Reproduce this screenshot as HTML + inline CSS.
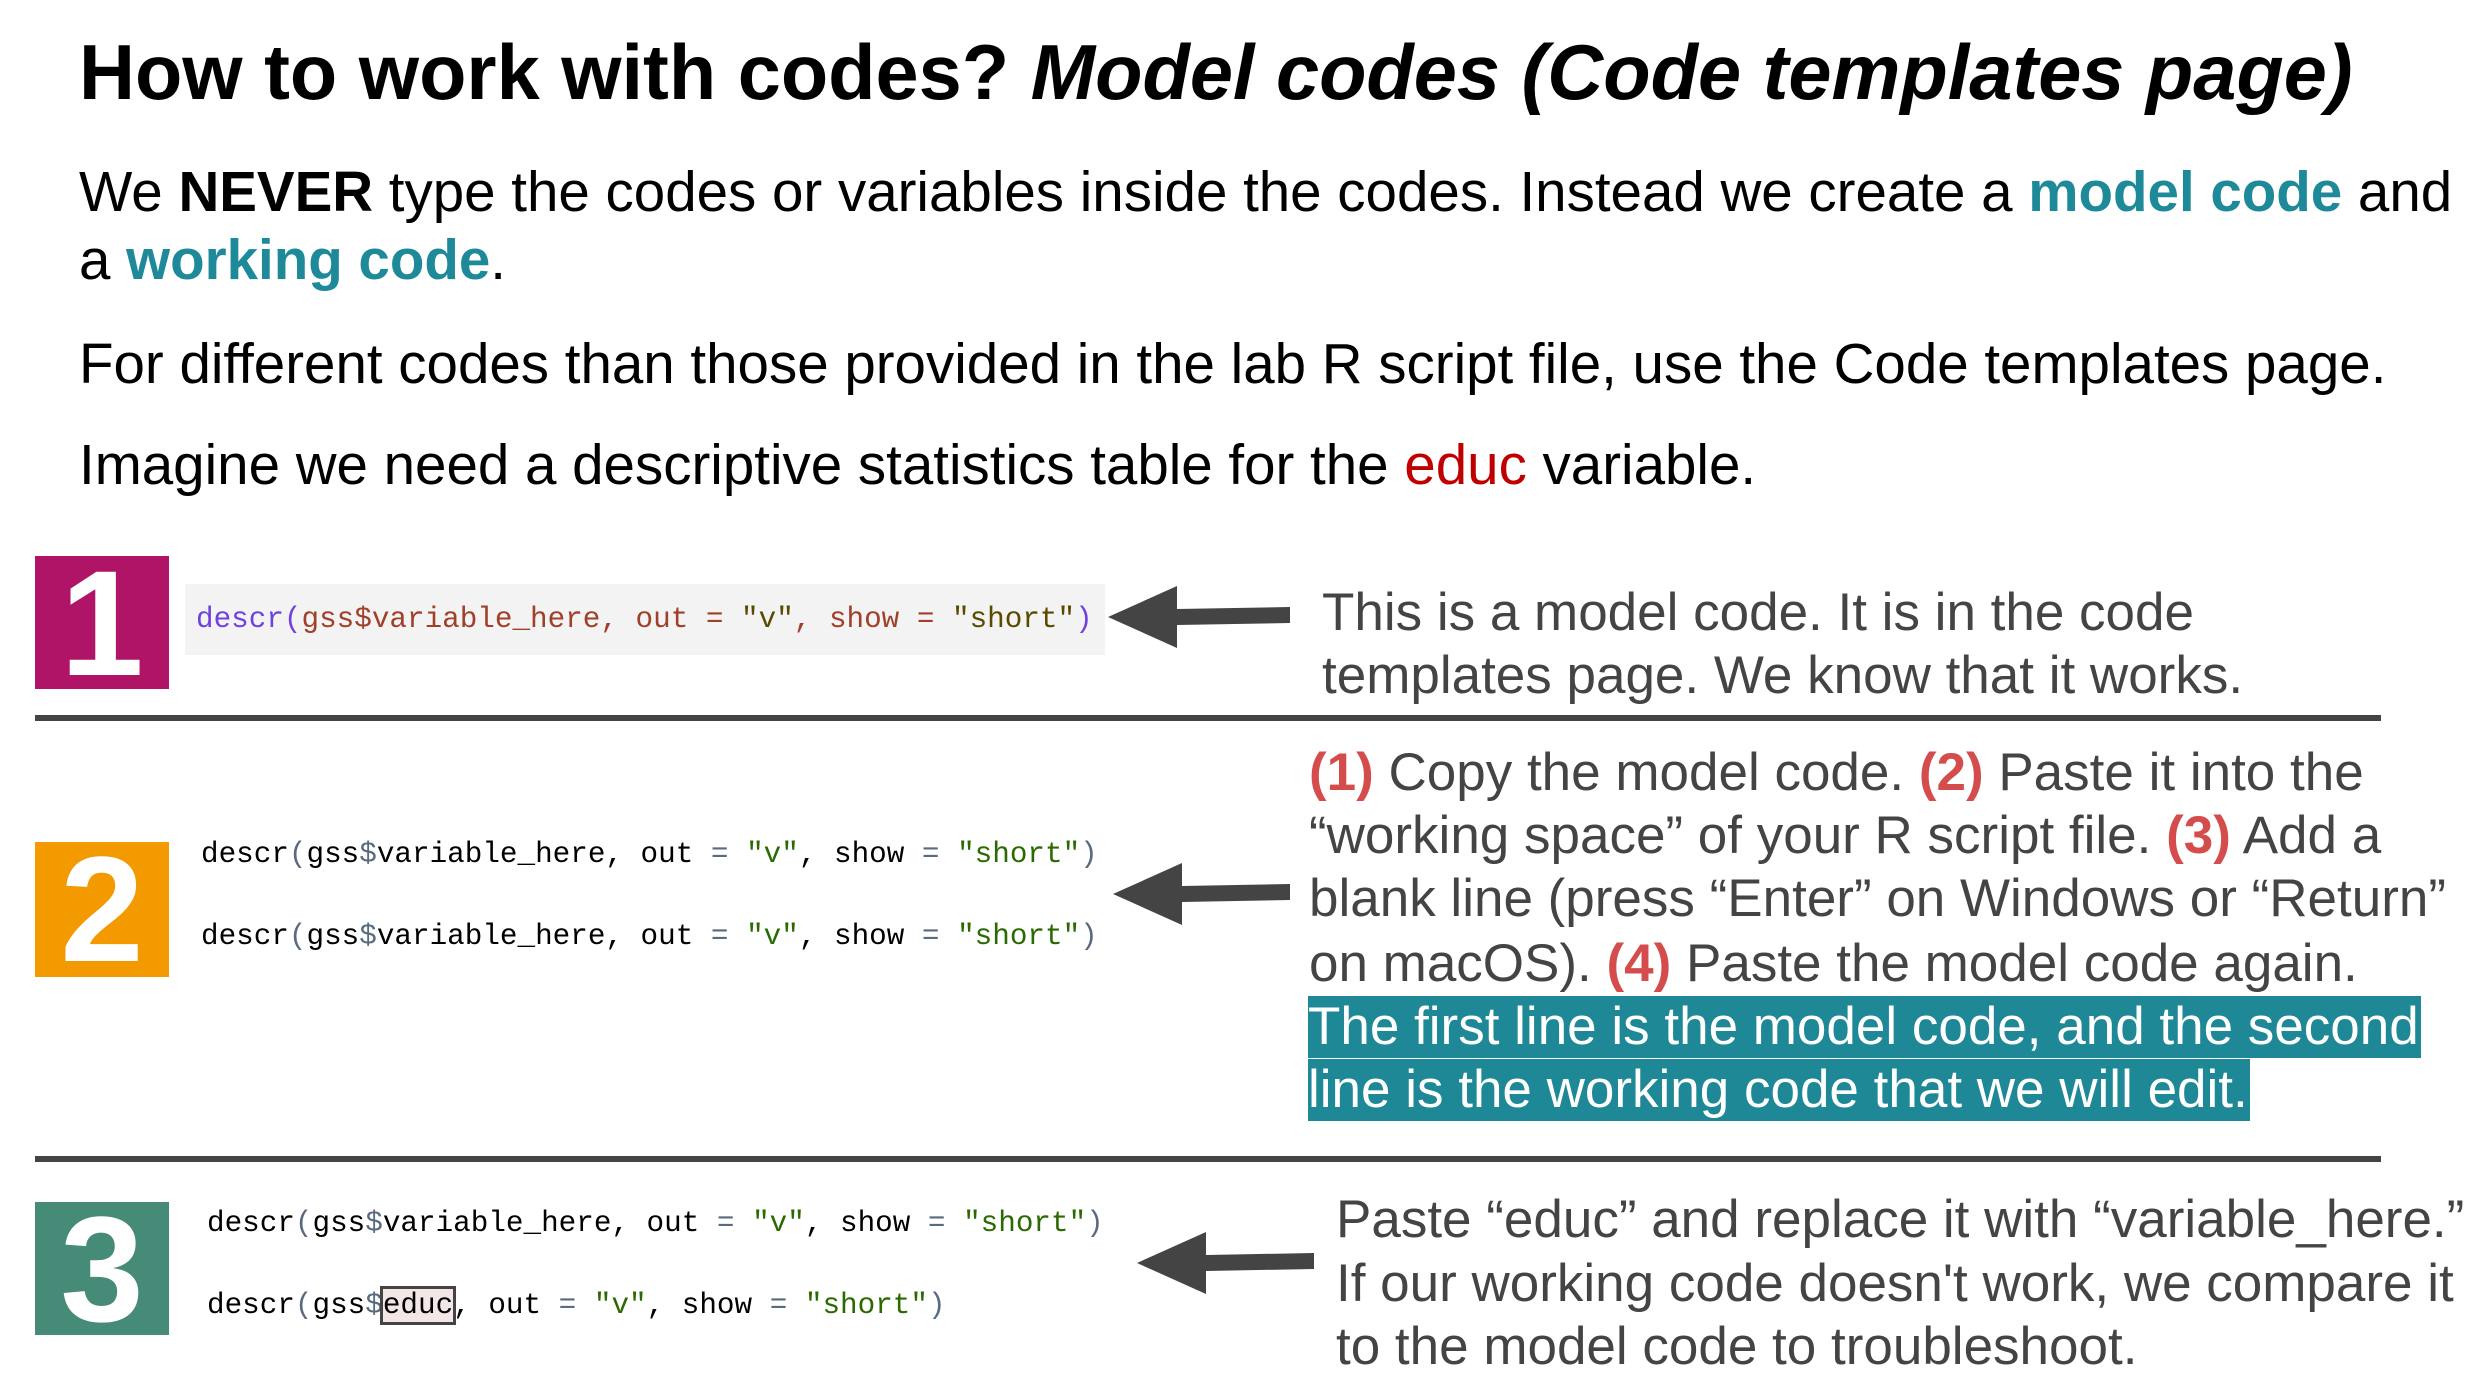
<!DOCTYPE html>
<html><head><meta charset="utf-8"><style>
body{margin:0;width:2482px;height:1382px;background:#fff;position:relative;overflow:hidden;font-family:"Liberation Sans",sans-serif}
.a{position:absolute;white-space:nowrap}
.t{color:#000;font-size:56.5px;line-height:64px}
.g{color:#444;font-size:53px;line-height:64px}
.code{font-family:"Liberation Mono",monospace;font-size:29.3px;line-height:40px}
.tl{color:#1e8a99;font-weight:bold}
.r{color:#d44c4c;font-weight:bold}
.box{position:absolute;left:35px;width:134px;color:#fff;font-weight:bold;font-size:150px;line-height:134px;text-align:center}
.hr{position:absolute;left:35px;width:2346px;height:6px;background:#444}
.hl{background:#1e8896;color:#fff}
.k{color:#000}.s{color:#2a6a00}.p{color:#5a6a80}
</style></head><body>
<div class="a" style="left:79px;top:28px;font-size:77.5px;font-weight:bold;line-height:90px">How to work with codes? <i>Model codes (Code templates page)</i></div>
<div class="a t" style="left:79px;top:160px">We <b>NEVER</b> type the codes or variables inside the codes. Instead we create a <span class="tl">model code</span> and</div>
<div class="a t" style="left:79px;top:228px">a <span class="tl">working code</span>.</div>
<div class="a t" style="left:79px;top:332px">For different codes than those provided in the lab R script file, use the Code templates page.</div>
<div class="a t" style="left:79px;top:433px">Imagine we need a descriptive statistics table for the <span style="color:#c00000">educ</span> variable.</div>

<div class="box" style="top:556px;height:133px;background:#b01466">1</div>
<div class="a" style="left:185px;top:584px;width:920px;height:71px;background:#f3f3f3"></div>
<div class="a code" style="left:196px;top:600px"><span style="color:#6f42e0">descr(</span><span style="color:#a0402a">gss$variable_here, out = </span><span style="color:#5a4a00">"v"</span><span style="color:#a0402a">, show = </span><span style="color:#5a4a00">"short"</span><span style="color:#6f42e0">)</span></div>
<div class="a g" style="left:1322px;top:581px">This is a model code. It is in the code</div>
<div class="a g" style="left:1322px;top:644px">templates page. We know that it works.</div>
<div class="hr" style="top:715px"></div>

<div class="box" style="top:842px;height:135px;background:#f39a00">2</div>
<div class="a code" style="left:201px;top:835px"><span class="k">descr</span><span class="p">(</span>gss<span class="p">$</span>variable_here, out <span class="p">=</span> <span class="s">"v"</span>, show <span class="p">=</span> <span class="s">"short"</span><span class="p">)</span></div>
<div class="a code" style="left:201px;top:917px"><span class="k">descr</span><span class="p">(</span>gss<span class="p">$</span>variable_here, out <span class="p">=</span> <span class="s">"v"</span>, show <span class="p">=</span> <span class="s">"short"</span><span class="p">)</span></div>
<div class="a g" style="left:1309px;top:741px"><span class="r">(1)</span> Copy the model code. <span class="r">(2)</span> Paste it into the</div>
<div class="a g" style="left:1309px;top:804px">“working space” of your R script file. <span class="r">(3)</span> Add a</div>
<div class="a g" style="left:1309px;top:867px">blank line (press “Enter” on Windows or “Return”</div>
<div class="a g" style="left:1309px;top:932px">on macOS). <span class="r">(4)</span> Paste the model code again.</div>
<div class="a g hl" style="left:1308px;top:996px;width:1113px;height:62px;line-height:62px">The first line is the model code, and the second</div>
<div class="a g hl" style="left:1308px;top:1059px;height:62px;line-height:62px;width:942px">line is the working code that we will edit.</div>
<div class="hr" style="top:1156px"></div>

<div class="box" style="top:1202px;height:133px;background:#468a78">3</div>
<div class="a code" style="left:207px;top:1204px"><span class="k">descr</span><span class="p">(</span>gss<span class="p">$</span>variable_here, out <span class="p">=</span> <span class="s">"v"</span>, show <span class="p">=</span> <span class="s">"short"</span><span class="p">)</span></div>
<div class="a code" style="left:207px;top:1286px"><span class="k">descr</span><span class="p">(</span>gss<span class="p">$</span><span style="background:#f2e6e6;outline:3px solid #444">educ</span>, out <span class="p">=</span> <span class="s">"v"</span>, show <span class="p">=</span> <span class="s">"short"</span><span class="p">)</span></div>
<div class="a g" style="left:1336px;top:1188px">Paste “educ” and replace it with “variable_here.”</div>
<div class="a g" style="left:1336px;top:1252px">If our working code doesn't work, we compare it</div>
<div class="a g" style="left:1336px;top:1315px">to the model code to troubleshoot.</div>

<svg class="a" style="left:0;top:0" width="2482" height="1382">
<g fill="#444">
<polygon points="1108,617 1177,586 1177,609 1290,607 1290,623 1177,625 1177,648"/>
<polygon points="1113,894 1182,863 1182,886 1290,884 1290,900 1182,902 1182,925"/>
<polygon points="1137,1263 1206,1232 1206,1255 1314,1253 1314,1269 1206,1271 1206,1294"/>
</g></svg>
</body></html>
